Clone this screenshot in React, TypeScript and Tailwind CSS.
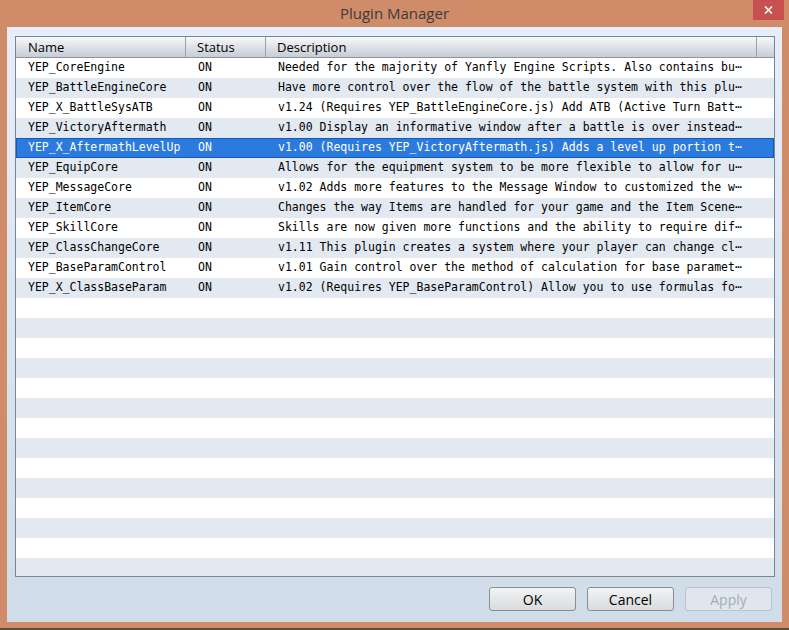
import React from 'react';

type Plugin = { name: string; status: string; desc: string };

const plugins: Plugin[] = [
  { name: 'YEP_CoreEngine', status: 'ON', desc: 'Needed for the majority of Yanfly Engine Scripts. Also contains bu⋯' },
  { name: 'YEP_BattleEngineCore', status: 'ON', desc: 'Have more control over the flow of the battle system with this plu⋯' },
  { name: 'YEP_X_BattleSysATB', status: 'ON', desc: 'v1.24 (Requires YEP_BattleEngineCore.js) Add ATB (Active Turn Batt⋯' },
  { name: 'YEP_VictoryAftermath', status: 'ON', desc: 'v1.00 Display an informative window after a battle is over instead⋯' },
  { name: 'YEP_X_AftermathLevelUp', status: 'ON', desc: 'v1.00 (Requires YEP_VictoryAftermath.js) Adds a level up portion t⋯' },
  { name: 'YEP_EquipCore', status: 'ON', desc: 'Allows for the equipment system to be more flexible to allow for u⋯' },
  { name: 'YEP_MessageCore', status: 'ON', desc: 'v1.02 Adds more features to the Message Window to customized the w⋯' },
  { name: 'YEP_ItemCore', status: 'ON', desc: 'Changes the way Items are handled for your game and the Item Scene⋯' },
  { name: 'YEP_SkillCore', status: 'ON', desc: 'Skills are now given more functions and the ability to require dif⋯' },
  { name: 'YEP_ClassChangeCore', status: 'ON', desc: 'v1.11 This plugin creates a system where your player can change cl⋯' },
  { name: 'YEP_BaseParamControl', status: 'ON', desc: 'v1.01 Gain control over the method of calculation for base paramet⋯' },
  { name: 'YEP_X_ClassBaseParam', status: 'ON', desc: 'v1.02 (Requires YEP_BaseParamControl) Allow you to use formulas fo⋯' },
];

const SELECTED = 4;
const TOTAL_ROWS = 26;

const uiFont = { fontFamily: '"Open Sans", "Noto Sans", sans-serif' };
const monoFont = { fontFamily: '"DejaVu Sans Mono", "Liberation Mono", monospace' };

function Button({ label, disabled }: { label: string; disabled?: boolean }) {
  return (
    <button
      style={uiFont}
      className={
        disabled
          ? 'w-[87px] h-[24px] rounded-[3px] border border-[#b9c3cf] bg-[#dfe6ee] text-[14px] text-[#a3adb9]'
          : 'w-[87px] h-[24px] rounded-[3px] border border-[#8a8f96] bg-gradient-to-b from-[#f3f3f3] to-[#d9dbde] text-[14px] text-black'
      }
    >
      {label}
    </button>
  );
}

export default function App() {
  const rows = Array.from({ length: TOTAL_ROWS }, (_, i) => plugins[i]);

  return (
    <div className="w-[789px] h-[630px] bg-[#d08b69] flex flex-col overflow-hidden">
      {/* title bar */}
      <div className="relative h-[27px] flex items-center justify-center">
        <span style={uiFont} className="text-[15px] text-[#3b3b3b] leading-none">
          Plugin Manager
        </span>
        <div className="absolute right-[5px] top-0 w-[31px] h-[20px] bg-[#c75050] flex items-center justify-center">
          <svg width="9" height="8" viewBox="0 0 9 8">
            <path d="M1 0.5 L8 7.5 M8 0.5 L1 7.5" stroke="white" strokeWidth="1.6" />
          </svg>
        </div>
      </div>

      {/* client area */}
      <div className="mx-[7px] h-[595px] bg-gradient-to-b from-[#e6eefa] to-[#d0dce8] flex flex-col pt-[9px] pl-[8px] pr-[9px] pb-[11px]">
        <div className="w-[760px] h-[542px] border border-[#7c848e] bg-white flex flex-col overflow-hidden">
          {/* header */}
          <div
            style={uiFont}
            className="h-[21px] shrink-0 flex border-b border-[#8d949c] bg-gradient-to-b from-[#f7f8fa] to-[#c6cdd5] text-[13px] text-black"
          >
            <div className="w-[170px] border-r border-[#9aa1a9] pl-[12px] pt-[2px] flex items-center">Name</div>
            <div className="w-[80px] border-r border-[#9aa1a9] pl-[11px] pt-[2px] flex items-center">Status</div>
            <div className="w-[491px] border-r border-[#9aa1a9] pl-[11px] pt-[2px] flex items-center">Description</div>
            <div className="flex-1" />
          </div>

          {/* rows */}
          <div style={monoFont} className="flex-1 flex flex-col text-[11.5px]">
            {rows.map((p, i) => {
              const sel = i === SELECTED;
              const bg = sel
                ? 'bg-[#2b7ade] text-white shadow-[inset_0_0_0_1px_#1459b8]'
                : i % 2 === 0
                  ? 'bg-white text-black'
                  : 'bg-[#e3e9f1] text-black';
              return (
                <div key={i} className={`h-[20px] shrink-0 flex items-center whitespace-nowrap ${bg}`}>
                  {p && (
                    <>
                      <div className="w-[170px] pl-[12px]">{p.name}</div>
                      <div className="w-[80px] pl-[12px]">{p.status}</div>
                      <div className="w-[491px] pl-[12px] overflow-hidden">{p.desc}</div>
                    </>
                  )}
                </div>
              );
            })}
          </div>
        </div>

        {/* dialog buttons */}
        <div className="mt-[10px] flex justify-end gap-[11px] pr-[1px]">
          <Button label="OK" />
          <Button label="Cancel" />
          <Button label="Apply" disabled />
        </div>
      </div>

      <div className="flex-1" />
      <div className="h-[2px] bg-[#5b4e40]" />
    </div>
  );
}
